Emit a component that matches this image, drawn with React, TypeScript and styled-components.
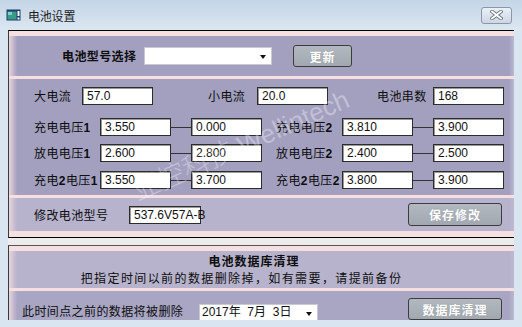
import React from "react";
import styled, { createGlobalStyle } from "styled-components";

const GlobalStyle = createGlobalStyle`
    body {
        margin: 0;
        background: #d9e6f2;
        font-family: "Noto Sans CJK SC", "Liberation Sans", sans-serif;
    }
`;

const Frame = styled.div`
    position: relative;
    width: 522px;
    height: 327px;
    display: flex;
    flex-direction: column;
    background: #d9e6f2;
    overflow: hidden;
`;

const TitleBar = styled.div`
    height: 30px;
    flex-shrink: 0;
    display: flex;
    align-items: center;
    padding-left: 6px;
    background: linear-gradient(to bottom, #c4d5e6, #dbe7f2);
`;

const TitleText = styled.span`
    margin-left: 7px;
    font-size: 12px;
    color: #1e1e1e;
    letter-spacing: -0.2px;
`;

const CloseButton = styled.div`
    margin-left: auto;
    margin-right: 10px;
    width: 29px;
    height: 15px;
    display: flex;
    align-items: center;
    justify-content: center;
    border: 1px solid #8a97a8;
    border-radius: 3px;
    background: linear-gradient(to bottom, #eaf0f6, #ccd7e3);
`;

const Client = styled.div`
    flex: 1;
    margin: 0 8px 7px 8px;
    display: flex;
    flex-direction: column;
    gap: 7px;
    background: #ececec;
    overflow: hidden;
`;

const Panel = styled.div<{ edge: string; bottom: number; grow?: boolean }>`
    display: flex;
    flex-direction: column;
    gap: 3px;
    padding: 5px 0 ${(p) => p.bottom}px 0;
    background: #f5dfe0;
    border-top: 1px solid ${(p) => p.edge};
    border-left: 1px solid #3a3a3a;
    border-bottom: ${(p) => (p.bottom ? "1px solid #000" : "none")};
    flex: ${(p) => (p.grow ? 1 : "none")};
    overflow: hidden;
`;

const tones: Record<string, string> = {
    dark: "#a3a0bf",
    light: "#b7b3cc",
    mid: "#a9a6c4",
};

const Section = styled.div<{ tone: string; h: number }>`
    height: ${(p) => p.h}px;
    flex-shrink: 0;
    box-sizing: border-box;
    background: linear-gradient(
        to right,
        #e8d4dc 0,
        ${(p) => tones[p.tone]} 8px,
        ${(p) => tones[p.tone]} calc(100% - 5px),
        #bdb9d2 100%
    );
`;

const Bar = styled.div<{ left: number; right?: number; top?: number }>`
    display: flex;
    align-items: ${(p) => (p.top !== undefined ? "flex-start" : "center")};
    height: 100%;
    box-sizing: border-box;
    padding-left: ${(p) => p.left}px;
    padding-right: ${(p) => p.right ?? 0}px;
    padding-top: ${(p) => p.top ?? 0}px;
`;

const Grid = styled.div`
    display: flex;
    flex-direction: column;
    padding: 8px 0 0 25px;
`;

const Row = styled.div<{ gap: number }>`
    display: flex;
    align-items: center;
    margin-top: ${(p) => p.gap}px;
`;

const Label = styled.span<{ w: number; bold?: boolean; shift?: number }>`
    width: ${(p) => p.w}px;
    flex-shrink: 0;
    font-size: 12px;
    line-height: 16px;
    letter-spacing: 0.4px;
    font-weight: ${(p) => (p.bold ? 700 : 400)};
    color: #0e0e0e;
    margin-top: ${(p) => p.shift ?? 0}px;
    white-space: nowrap;

    b {
        font-family: "Liberation Sans", sans-serif;
        font-weight: 700;
    }
`;

const Field = styled.div<{ w: number }>`
    width: ${(p) => p.w}px;
    height: 18px;
    flex-shrink: 0;
    box-sizing: border-box;
    padding-left: 4px;
    background: #fff;
    border: 1px solid #2c2c2c;
    box-shadow: inset 1px 1px 0 #9a9a9a;
    font-family: "Liberation Sans", sans-serif;
    font-size: 12px;
    line-height: 16px;
    color: #111;
    white-space: nowrap;
`;

const Link = styled.div`
    width: 20px;
    height: 1px;
    flex-shrink: 0;
    background: #333;
`;

const Space = styled.div<{ w: number; fill?: boolean }>`
    width: ${(p) => p.w}px;
    flex: ${(p) => (p.fill ? 1 : "none")};
`;

const Dropdown = styled.div<{ w: number; h: number; shift?: number }>`
    position: relative;
    width: ${(p) => p.w}px;
    height: ${(p) => p.h}px;
    flex-shrink: 0;
    box-sizing: border-box;
    margin-top: ${(p) => p.shift ?? 0}px;
    padding-left: 2px;
    background: #fff;
    border: 1px solid #c9c9d6;
    font-family: "Liberation Sans", "Noto Sans CJK SC", sans-serif;
    font-size: 12px;
    line-height: 14px;
    color: #111;
    white-space: pre;
`;

const Arrow = styled.span`
    position: absolute;
    right: 5px;
    top: 50%;
    margin-top: -1px;
    border-left: 3.5px solid transparent;
    border-right: 3.5px solid transparent;
    border-top: 4px solid #111;
`;

const Button = styled.div<{ w: number; h: number }>`
    width: ${(p) => p.w}px;
    height: ${(p) => p.h}px;
    flex-shrink: 0;
    box-sizing: border-box;
    display: flex;
    align-items: center;
    justify-content: center;
    border: 1px solid #3c3c3c;
    border-radius: 3px;
    background: linear-gradient(to bottom, #b2b8bf, #a2a8b0);
    color: #fff;
    font-size: 12px;
    font-weight: 700;
    letter-spacing: 1px;
    text-shadow: 0 0 1px #8c9198;
`;

const Heading = styled.div<{ pad: number; spacing: number; bold?: boolean }>`
    text-align: center;
    padding-right: ${(p) => p.pad}px;
    font-size: 12px;
    line-height: 17px;
    letter-spacing: ${(p) => p.spacing}px;
    font-weight: ${(p) => (p.bold ? 700 : 400)};
    color: #0e0e0e;
`;

const Stack = styled.div`
    display: flex;
    flex-direction: column;
    padding-top: 1px;
`;

const Watermark = styled.div`
    position: absolute;
    left: 134px;
    top: 176px;
    transform: rotate(-24deg);
    transform-origin: left center;
    font-size: 27px;
    line-height: 30px;
    font-weight: 300;
    color: rgba(255, 255, 255, 0.34);
    white-space: nowrap;
    pointer-events: none;

    span {
        font-family: "Liberation Sans", sans-serif;
        font-size: 26px;
    }
`;

const WindowIcon = () => (
    <svg width="15" height="12" viewBox="0 0 15 12">
        <rect x="0.5" y="0.5" width="14" height="11" fill="#1f3c6e" />
        <rect x="1.5" y="2.5" width="9" height="8" fill="#3a9a88" />
        <rect x="2" y="3" width="4" height="3" fill="#7fd1c0" />
        <rect x="11.5" y="2" width="2" height="5" fill="#fff" />
        <rect x="11.5" y="8.5" width="2" height="2" fill="#fff" />
    </svg>
);

const CloseGlyph = () => (
    <svg width="13" height="10" viewBox="0 0 13 10">
        <path
            d="M2 1.5 L11 8.5 M11 1.5 L2 8.5"
            stroke="#6b7685"
            strokeWidth="3.6"
            strokeLinecap="square"
        />
        <path
            d="M2 1.5 L11 8.5 M11 1.5 L2 8.5"
            stroke="#fff"
            strokeWidth="1.8"
            strokeLinecap="square"
        />
    </svg>
);

interface Pair {
    label: string;
    num: string;
    a: string;
    b: string;
}

const pairRows: Pair[][] = [
    [
        { label: "充电电压", num: "1", a: "3.550", b: "0.000" },
        { label: "充电电压", num: "2", a: "3.810", b: "3.900" },
    ],
    [
        { label: "放电电压", num: "1", a: "2.600", b: "2.800" },
        { label: "放电电压", num: "2", a: "2.400", b: "2.500" },
    ],
    [
        { label: "充电2电压", num: "1", a: "3.550", b: "3.700" },
        { label: "充电2电压", num: "2", a: "3.800", b: "3.900" },
    ],
];

const PairLabel: React.FC<{ text: string; num: string }> = ({ text, num }) => {
    const parts = text.split("2");
    return (
        <Label w={66}>
            {parts.length > 1 ? (
                <>
                    {parts[0]}
                    <b>2</b>
                    {parts[1]}
                </>
            ) : (
                text
            )}
            <b>{num}</b>
        </Label>
    );
};

const gaps = [13, 8, 9];

const App: React.FC = () => {
    return (
        <Frame>
            <GlobalStyle />
            <TitleBar>
                <WindowIcon />
                <TitleText>电池设置</TitleText>
                <CloseButton>
                    <CloseGlyph />
                </CloseButton>
            </TitleBar>
            <Client>
                <Panel edge="#000" bottom={6}>
                    <Section tone="dark" h={40}>
                        <Bar left={53}>
                            <Label w={82} bold>
                                电池型号选择
                            </Label>
                            <Dropdown w={128} h={18}>
                                <Arrow />
                            </Dropdown>
                            <Space w={21} />
                            <Button w={59} h={22}>
                                更新
                            </Button>
                        </Bar>
                    </Section>
                    <Section tone="dark" h={116}>
                        <Grid>
                            <Row gap={0}>
                                <Label w={48}>大电流</Label>
                                <Field w={71}>57.0</Field>
                                <Space w={55} />
                                <Label w={49}>小电流</Label>
                                <Field w={71}>20.0</Field>
                                <Space w={49} />
                                <Label w={56}>电池串数</Label>
                                <Field w={71}>168</Field>
                            </Row>
                            {pairRows.map((row, i) => (
                                <Row gap={gaps[i]} key={i}>
                                    {row.map((p, j) => (
                                        <React.Fragment key={j}>
                                            {j === 1 && <Space w={14} />}
                                            <PairLabel text={p.label} num={p.num} />
                                            <Field w={71}>{p.a}</Field>
                                            <Link />
                                            <Field w={71}>{p.b}</Field>
                                        </React.Fragment>
                                    ))}
                                </Row>
                            ))}
                        </Grid>
                    </Section>
                    <Section tone="light" h={33}>
                        <Bar left={25} right={12}>
                            <Label w={95}>修改电池型号</Label>
                            <Field w={72}>537.6V57A-B</Field>
                            <Space w={0} fill />
                            <Button w={94} h={23}>
                                保存修改
                            </Button>
                        </Bar>
                    </Section>
                </Panel>
                <Panel edge="#555" bottom={0} grow>
                    <Section tone="light" h={37}>
                        <Stack>
                            <Heading pad={15} spacing={1} bold>
                                电池数据库清理
                            </Heading>
                            <Heading pad={40} spacing={1.4}>
                                把指定时间以前的数据删除掉，如有需要，请提前备份
                            </Heading>
                        </Stack>
                    </Section>
                    <Section tone="mid" h={30}>
                        <Bar left={13} right={12} top={7}>
                            <Label w={177} shift={5}>
                                此时间点之前的数据将被删除
                            </Label>
                            <Dropdown w={119} h={17} shift={6}>
                                {"2017年  7月  3日"}
                                <Arrow />
                            </Dropdown>
                            <Space w={0} fill />
                            <Button w={94} h={22}>
                                数据库清理
                            </Button>
                        </Bar>
                    </Section>
                </Panel>
            </Client>
            <Watermark>
                亚控科技 <span>Wellintech</span>
            </Watermark>
        </Frame>
    );
};

export default App;
